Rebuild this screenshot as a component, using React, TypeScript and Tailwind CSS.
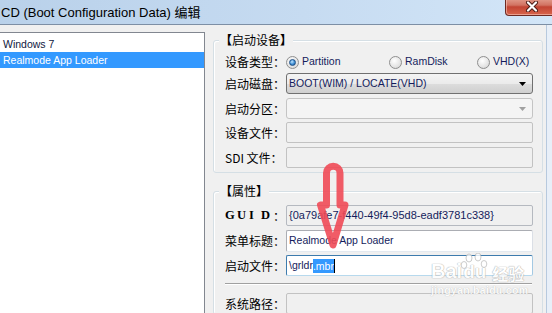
import React from "react";

const cjk = "font-['Noto_Sans_CJK_SC',sans-serif]";
const lat = "font-['Liberation_Sans','Noto_Sans_CJK_SC',sans-serif]";

function Radio({ checked }: { checked?: boolean }) {
  return (
    <div className="w-[13px] h-[13px] rounded-full border border-[#8f8f8f] bg-[radial-gradient(circle_at_40%_35%,#ffffff,#e4e4e4_60%,#cfcfcf)] flex items-center justify-center shrink-0">
      {checked && (
        <div className="w-[7px] h-[7px] rounded-full border border-[#1d4f86] bg-[radial-gradient(circle_at_40%_35%,#bfe4ff,#3f90d6_55%,#174f8f)]" />
      )}
    </div>
  );
}

function Label({ children }: { children: React.ReactNode }) {
  return (
    <div className={`w-[61px] shrink-0 text-[12px] leading-[14px] text-black ${cjk}`}>{children}</div>
  );
}

function GroupBox({ title, className, children }: { title: React.ReactNode; className?: string; children: React.ReactNode }) {
  return (
    <div className={`relative w-[330px] border border-[#d5dfe5] rounded-[3px] shadow-[inset_1px_1px_0_#ffffff] ${className ?? ""}`}>
      <div className={`absolute left-[5px] top-[-9px] h-[16px] px-[1px] bg-[#f0f0f0] text-[12px] leading-[16px] text-black ${cjk}`}>{title}</div>
      {children}
    </div>
  );
}

function TextBox({ className, children }: { className?: string; children?: React.ReactNode }) {
  return (
    <div className={`w-[247px] h-[21px] rounded-[2px] border flex items-center pl-[2px] text-[10.5px] text-[#141c5c] ${lat} ${className ?? ""}`}>
      {children}
    </div>
  );
}

export default function App() {
  return (
    <div className={`relative w-[552px] h-[313px] overflow-hidden bg-[#f0f0f0] ${lat}`}>
      {/* title bar */}
      <div className="relative h-[24px] bg-[linear-gradient(to_right,#b9d1ea,#c6dbf1_55%,#d3e6f8)] flex items-center">
        <span className={`pl-[1px] text-[13px] leading-none text-black ${lat}`}>CD (Boot Configuration Data) 编辑</span>
        <div className="absolute left-[505px] top-[-3px] w-[56px] h-[19px] rounded-b-[4px] border border-t-0 border-[#6e2a22] bg-[linear-gradient(to_bottom,#e6a797,#d27362_45%,#c24433_55%,#d8654c)] shadow-[inset_0_0_0_1px_rgba(255,220,210,0.5)]">
          <svg className="absolute left-[19px] top-[4px]" width="14" height="11" viewBox="0 0 14 11">
            <path d="M3 1.5 L11 9.5 M11 1.5 L3 9.5" stroke="#4a1a14" strokeWidth="4" strokeLinecap="round" />
            <path d="M3 1.5 L11 9.5 M11 1.5 L3 9.5" stroke="#ffffff" strokeWidth="2.2" strokeLinecap="round" />
          </svg>
        </div>
      </div>
      <div className="h-px bg-[#7d8fa5]" />

      {/* body */}
      <div className="flex h-[288px]">
        {/* list */}
        <div className="w-[205px] mt-[7px] bg-white border-t border-r border-[#828790] pt-[3px] flex flex-col">
          <div className="h-[16px] leading-[16px] pl-[3px] text-[10.5px] text-[#101840]">Windows 7</div>
          <div className="h-[16px] leading-[16px] pl-[3px] text-[10.5px] text-white bg-[#3399ff]">Realmode App Loader</div>
        </div>

        {/* right column */}
        <div className="w-[341px] pl-[8px] flex flex-col">
          <GroupBox
            className="mt-[15px] pt-[11px] pb-[4px]"
            title={<span><span className="font-black">【</span>启动设备<span className="font-black">】</span></span>}
          >
            <div className="flex items-center h-[20px] pl-[11px]">
              <Label>设备类型：</Label>
              <div className="flex items-center w-[103px]">
                <Radio checked />
                <span className="ml-[3px] text-[10.5px] text-[#141c5c]">Partition</span>
              </div>
              <div className="flex items-center w-[88px]">
                <Radio />
                <span className="ml-[3px] text-[10.5px] text-[#141c5c]">RamDisk</span>
              </div>
              <div className="flex items-center">
                <Radio />
                <span className="ml-[3px] text-[10.5px] text-[#141c5c]">VHD(X)</span>
              </div>
            </div>
            <div className="flex items-center mt-[1px] pl-[11px]">
              <Label>启动磁盘：</Label>
              <TextBox className="border-[#707070] rounded-[3px] bg-[linear-gradient(to_bottom,#f4f4f4,#ebebeb_50%,#dddddd_51%,#cfcfcf)] justify-between pr-[6px]">
                <span>BOOT(WIM) / LOCATE(VHD)</span>
                <svg width="7" height="4" viewBox="0 0 7 4"><path d="M0 0 H7 L3.5 4 Z" fill="#000" /></svg>
              </TextBox>
            </div>
            <div className="flex items-center mt-[4px] pl-[11px]">
              <Label>启动分区：</Label>
              <TextBox className="border-[#c4c4c4] rounded-[3px] bg-[#f4f4f4] justify-end pr-[6px]">
                <svg width="7" height="4" viewBox="0 0 7 4"><path d="M0 0 H7 L3.5 4 Z" fill="#a0a0a0" /></svg>
              </TextBox>
            </div>
            <div className="flex items-center mt-[3px] pl-[11px]">
              <Label>设备文件：</Label>
              <TextBox className="border-[#c2c2c2] bg-[#f0f0f0]" />
            </div>
            <div className="flex items-center mt-[4px] pl-[11px]">
              <Label>SDI 文件：</Label>
              <TextBox className="border-[#c2c2c2] bg-[#f0f0f0]" />
            </div>
          </GroupBox>

          <GroupBox
            className="mt-[18px] pt-[13px] h-[200px]"
            title={<span><span className="font-black">【</span>属性<span className="font-black">】</span></span>}
          >
            <div className="flex items-center pl-[11px]">
              <div className="w-[61px] shrink-0 flex items-center text-[12.5px] font-bold text-black font-['Liberation_Serif',serif]">
                <span className="w-[12px]">G</span>
                <span className="w-[12px]">U</span>
                <span className="w-[12px]">I</span>
                <span className="w-[12px]">D</span>
                <span className={`text-[12px] font-normal ${cjk}`}>：</span>
              </div>
              <TextBox className="border-[#b5b9c0] bg-[#f0f0f0] text-[11px]">{"{0a79afe7-f440-49f4-95d8-eadf3781c338}"}</TextBox>
            </div>
            <div className="flex items-center mt-[4px] pl-[11px]">
              <Label>菜单标题：</Label>
              <TextBox className="h-[22px] border-[#abadb3] border-b-[#e3e9ef] border-r-[#dbdfe6] bg-white">Realmode App Loader</TextBox>
            </div>
            <div className="flex items-center mt-[3px] pl-[11px]">
              <Label>启动文件：</Label>
              <TextBox className="border-[#3d7bad] border-b-[#b7d9ed] border-r-[#a4c9e3] bg-white">
                <span>\grldr</span>
                <span className="bg-[#3399ff] text-white leading-[14px]">.mbr</span>
                <span className="w-px h-[14px] bg-black" />
              </TextBox>
            </div>
            <div className="ml-[11px] mt-[7px] w-[307px] h-[2px] border-t border-[#a0a0a0] border-b border-b-white" />
            <div className="flex items-center mt-[8px] pl-[11px]">
              <Label>系统路径：</Label>
              <TextBox className="border-[#c2c2c2] bg-[#f0f0f0]" />
            </div>
          </GroupBox>
        </div>

        {/* window right frame */}
        <div className="w-px bg-[#b7c9de]" />
        <div className="flex-1 bg-[#e8eff8]" />
      </div>

      {/* Baidu watermark */}
      <div className="absolute left-[431px] top-[251px] pointer-events-none flex flex-col items-start opacity-80">
        <div className="flex items-end h-[30px]">
          <span className="text-[20px] font-bold leading-none text-white [text-shadow:0_0_1px_#9a9a9a,0_0_1px_#9a9a9a]">Bai</span>
          <div className="relative w-[30px] h-[28px] -ml-[2px]">
            <svg className="absolute left-0 top-0" width="30" height="28" viewBox="0 0 30 28">
              <ellipse cx="9" cy="5" rx="3" ry="4" fill="#fff" stroke="#b0b0b0" strokeWidth="0.8" />
              <ellipse cx="18" cy="4" rx="3" ry="4" fill="#fff" stroke="#b0b0b0" strokeWidth="0.8" />
              <ellipse cx="4" cy="12" rx="2.8" ry="3.5" fill="#fff" stroke="#b0b0b0" strokeWidth="0.8" />
              <ellipse cx="24" cy="11" rx="2.8" ry="3.5" fill="#fff" stroke="#b0b0b0" strokeWidth="0.8" />
            </svg>
            <span className="absolute left-[3px] bottom-0 text-[19px] font-bold leading-none text-white [text-shadow:0_0_1px_#9a9a9a,0_0_1px_#9a9a9a]">du</span>
          </div>
          <span className={`ml-[2px] text-[16px] font-bold leading-none text-white [text-shadow:0_0_1px_#9a9a9a,0_0_1px_#9a9a9a] ${cjk}`}>经验</span>
        </div>
        <span className="mt-[4px] text-[10.5px] font-bold leading-none text-white [text-shadow:0_0_1px_#a0a0a0] tracking-[0.3px]">jingyan.baidu.com</span>
      </div>

      {/* red arrow annotation */}
      <svg className="absolute left-0 top-0 pointer-events-none" width="552" height="313" viewBox="0 0 552 313">
        <path
          d="M326.5 205 L326.5 173 A6.75 6.75 0 0 1 340 173 L340 205 L345 205 L333 245 L320.5 205 Z"
          fill="none"
          stroke="#ef4a57"
          strokeOpacity="0.9"
          strokeWidth="7"
          strokeLinejoin="round"
        />
      </svg>
    </div>
  );
}
